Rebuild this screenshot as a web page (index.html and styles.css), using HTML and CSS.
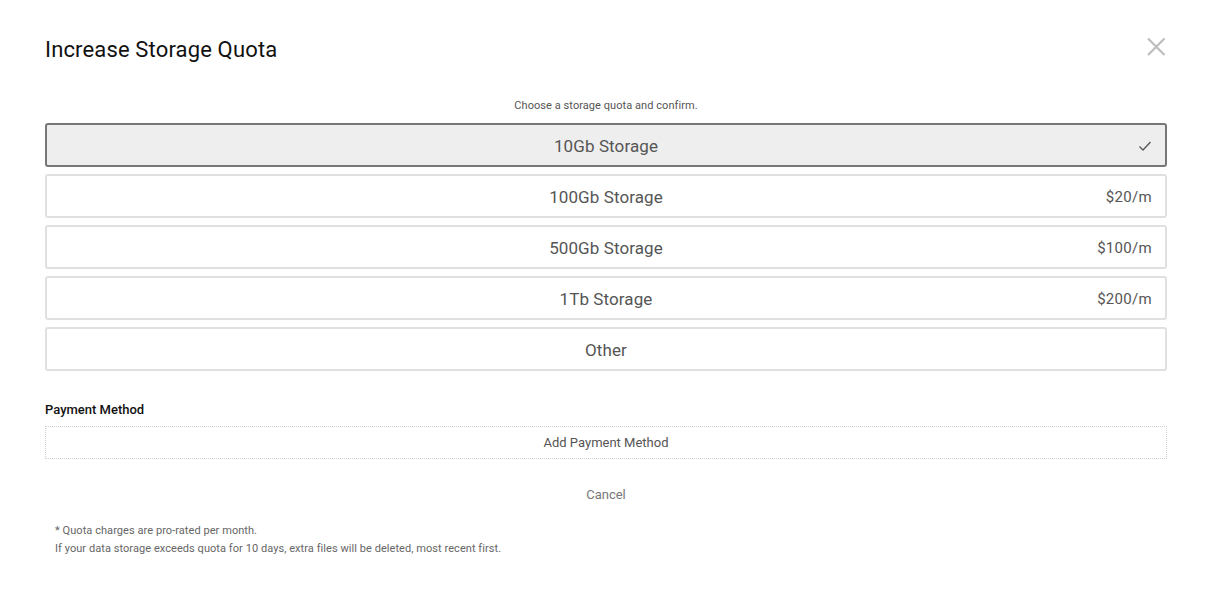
FILE: index.html
```html
<!DOCTYPE html>
<html>
<head>
<meta charset="utf-8">
<link rel="stylesheet" href="styles.css">
</head>
<body>
<div class="modal">
  <div class="header">
    <h1 class="title">Increase Storage Quota</h1>
    <button class="close" aria-label="Close">
      <svg width="20" height="20" viewBox="0 0 20 20"><path d="M2 1.5 L18.5 18 M18.5 1.5 L2 18" stroke="#bdbdbd" stroke-width="2.2" fill="none"/></svg>
    </button>
  </div>
  <p class="subtitle">Choose a storage quota and confirm.</p>
  <div class="options">
    <div class="option selected"><span class="label">10Gb Storage</span><span class="price"><svg width="14" height="12" viewBox="0 0 14 12"><path d="M1.5 6.5 L5 10 L12.5 2" stroke="#555" stroke-width="1.3" fill="none"/></svg></span></div>
    <div class="option"><span class="label">100Gb Storage</span><span class="price">$20/m</span></div>
    <div class="option"><span class="label">500Gb Storage</span><span class="price">$100/m</span></div>
    <div class="option"><span class="label">1Tb Storage</span><span class="price">$200/m</span></div>
    <div class="option"><span class="label">Other</span></div>
  </div>
  <h2 class="section">Payment Method</h2>
  <div class="add-payment">Add Payment Method</div>
  <div class="cancel">Cancel</div>
  <div class="notes">
    <p>* Quota charges are pro-rated per month.</p>
    <p>If your data storage exceeds quota for 10 days, extra files will be deleted, most recent first.</p>
  </div>
</div>
</body>
</html>
```
FILE: styles.css
```css
* { box-sizing: border-box; }
html, body { margin: 0; padding: 0; background: #fff; }
body { font-family: Roboto, "Noto Sans", sans-serif; color: #222; }
.modal { padding: 35px 54px 0 45px; }
.header { display: flex; justify-content: space-between; align-items: flex-start; }
.title { margin: 0; font-size: 22px; font-weight: 400; line-height: 30px; color: #111; letter-spacing: 0.15px; }
.close { border: 0; background: none; padding: 0; margin: 2px 1px 0 0; width: 20px; height: 20px; cursor: pointer; }
.close svg { display: block; }
.subtitle { margin: 33px 0 0; text-align: center; font-size: 11px; line-height: 16px; color: #555; letter-spacing: 0.06px; }
.options { margin-top: 9px; display: flex; flex-direction: column; gap: 7px; }
.option { position: relative; height: 44px; padding-top: 2px; border: 2px solid #e0e0e0; border-radius: 3px; display: flex; align-items: center; justify-content: center; }
.option.selected { border-color: #777; background: #eee; }
.label { font-size: 17px; color: #555; letter-spacing: 0.1px; }
.price { position: absolute; right: 13px; top: 50%; transform: translateY(-50%); margin-top: 1px; font-size: 15px; color: #555; display: flex; align-items: center; letter-spacing: 0.3px; }
.section { margin: 30px 0 0; font-size: 13px; font-weight: 500; line-height: 17px; color: #111; }
.add-payment { margin-top: 8px; height: 33px; border: 1px dotted #cfcfcf; display: flex; align-items: center; justify-content: center; font-size: 13px; color: #555; }
.cancel { margin-top: 27px; text-align: center; font-size: 13px; line-height: 17px; color: #777; }
.notes { margin-top: 19px; padding-left: 10px; font-size: 11px; color: #666; letter-spacing: 0.06px; }
.notes p { margin: 0; line-height: 18px; }
```
